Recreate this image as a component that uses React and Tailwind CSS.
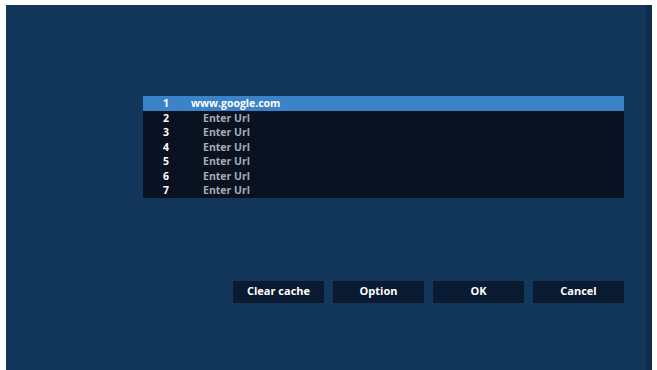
import React from "react";

const rows = [
  { n: "1", t: "www.google.com", sel: true },
  { n: "2", t: "Enter Url" },
  { n: "3", t: "Enter Url" },
  { n: "4", t: "Enter Url" },
  { n: "5", t: "Enter Url" },
  { n: "6", t: "Enter Url" },
  { n: "7", t: "Enter Url" },
];

const buttons = ["Clear cache", "Option", "OK", "Cancel"];

export default function App() {
  return (
    <div
      className="w-[657px] h-[370px] bg-white pl-[6px] pt-[5px] pr-[5px] flex"
      style={{ fontFamily: '"Open Sans", "Noto Sans", sans-serif' }}
    >
      <div className="flex-1 bg-[#12375b] border-r-[6px] border-[#0f2e4e] flex flex-col pl-[137px] pr-[21px] pt-[91px]">
        <div className="w-[481px] bg-[#0a1222] flex flex-col">
          {rows.map((r) => (
            <div
              key={r.n}
              className={
                "h-[14.5px] flex items-center text-[10.5px] font-bold leading-none " +
                (r.sel ? "bg-[#3a83c9] text-white" : "text-[#a7acb4]")
              }
            >
              <span className="w-[48px] pl-[20px] text-white">{r.n}</span>
              <span className={r.sel ? "" : "pl-[12px]"}>{r.t}</span>
            </div>
          ))}
        </div>
        <div className="flex gap-[9px] mt-[83px] pl-[90px]">
          {buttons.map((b) => (
            <div
              key={b}
              className="w-[91px] h-[22px] bg-[#0a1a30] text-white text-[11px] font-bold flex items-center justify-center"
            >
              {b}
            </div>
          ))}
        </div>
      </div>
    </div>
  );
}
